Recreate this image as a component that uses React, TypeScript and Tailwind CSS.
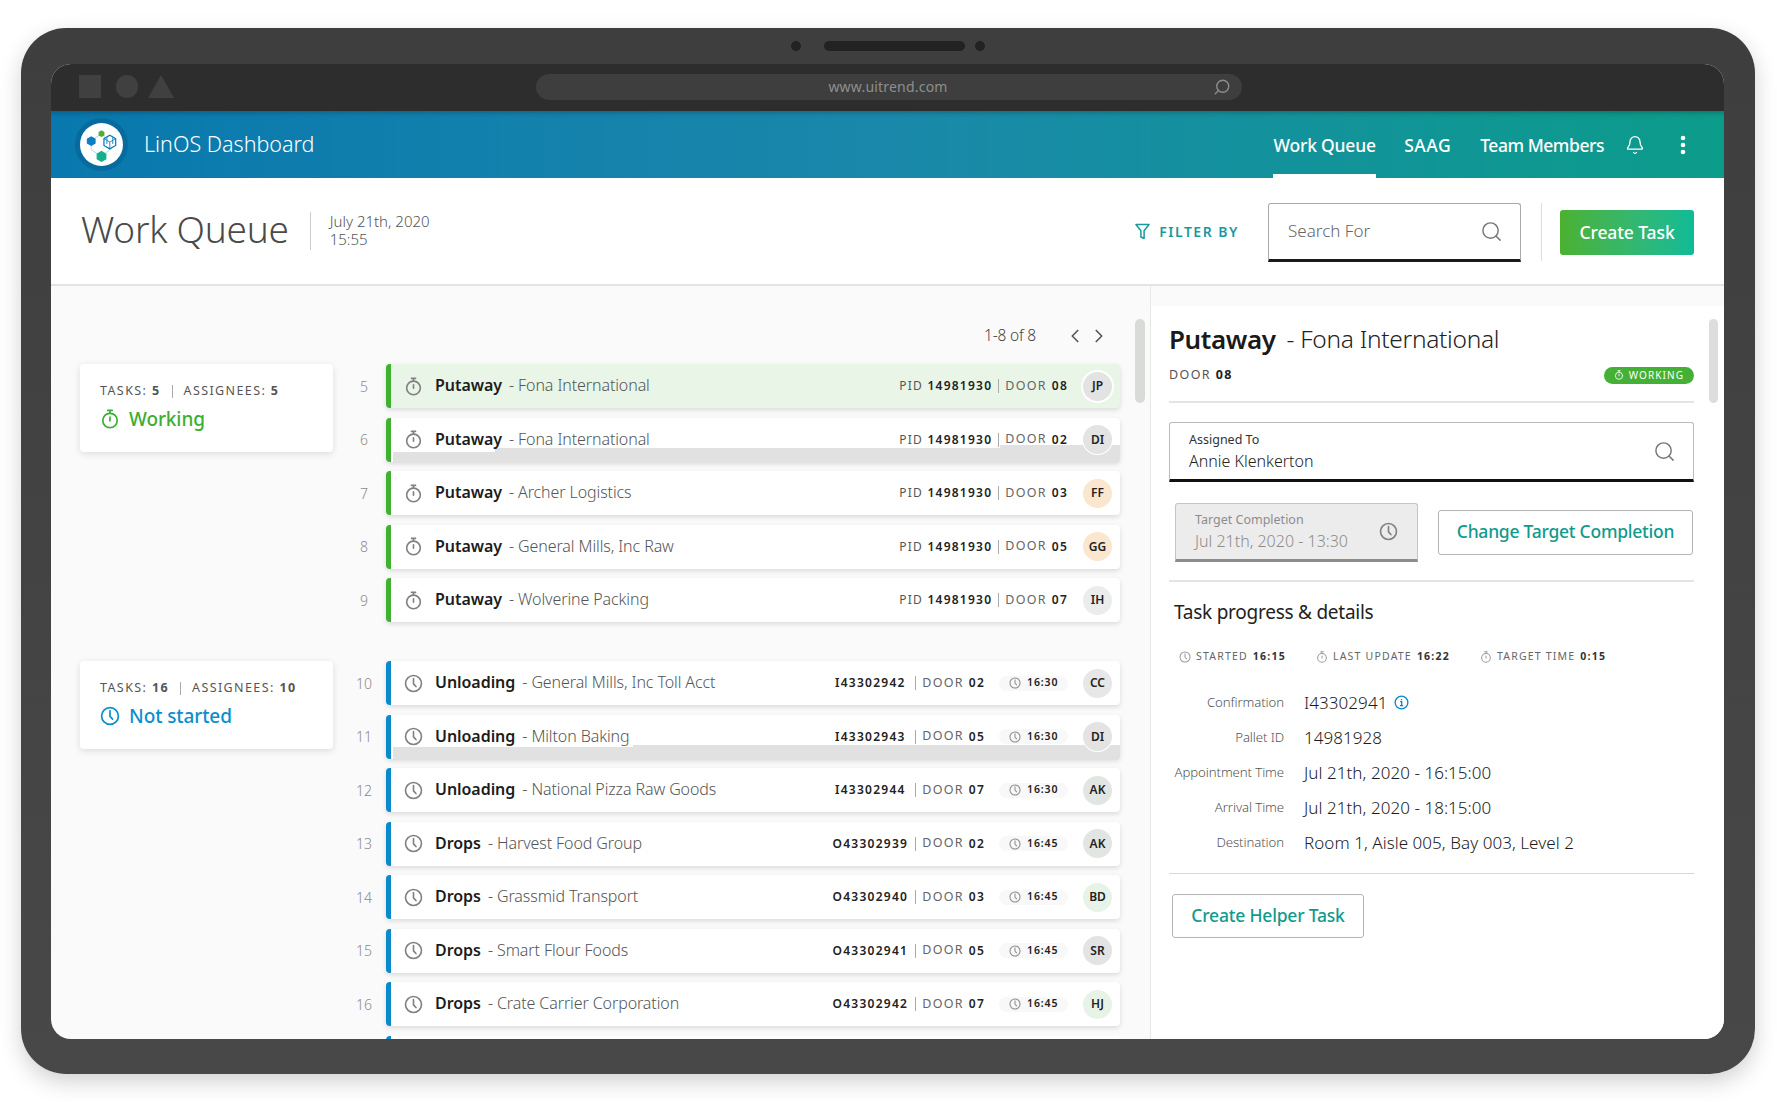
import { Bell, ChevronLeft, ChevronRight, Search } from "lucide-react";

type Row = {
  n: number;
  title: string;
  name: string;
  code: string;
  door: string;
  who: string;
  tone: string;
  time?: string;
  active?: boolean;
  band?: "short" | "long";
};

const working: Row[] = [
  { n: 5, title: "Putaway", name: "Fona International", code: "14981930", door: "08", who: "JP", tone: "bg-[#e2e3e2] ring-2 ring-white", active: true },
  { n: 6, title: "Putaway", name: "Fona International", code: "14981930", door: "02", who: "DI", tone: "bg-[#e2e3e2] ring-1 ring-white", band: "short" },
  { n: 7, title: "Putaway", name: "Archer Logistics", code: "14981930", door: "03", who: "FF", tone: "bg-[#fbe6cf]" },
  { n: 8, title: "Putaway", name: "General Mills, Inc Raw", code: "14981930", door: "05", who: "GG", tone: "bg-[#fbe6cf]" },
  { n: 9, title: "Putaway", name: "Wolverine Packing", code: "14981930", door: "07", who: "IH", tone: "bg-[#ebecec]" },
];

const notStarted: Row[] = [
  { n: 10, title: "Unloading", name: "General Mills, Inc Toll Acct", code: "I43302942", door: "02", who: "CC", tone: "bg-[#e6e7e6]", time: "16:30" },
  { n: 11, title: "Unloading", name: "Milton Baking", code: "I43302943", door: "05", who: "DI", tone: "bg-[#e2e3e2] ring-1 ring-white", time: "16:30", band: "long" },
  { n: 12, title: "Unloading", name: "National Pizza Raw Goods", code: "I43302944", door: "07", who: "AK", tone: "bg-[#e2e6e2]", time: "16:30" },
  { n: 13, title: "Drops", name: "Harvest Food Group", code: "O43302939", door: "02", who: "AK", tone: "bg-[#e2e6e2]", time: "16:45" },
  { n: 14, title: "Drops", name: "Grassmid Transport", code: "O43302940", door: "03", who: "BD", tone: "bg-[#e8f3e8]", time: "16:45" },
  { n: 15, title: "Drops", name: "Smart Flour Foods", code: "O43302941", door: "05", who: "SR", tone: "bg-[#e2e3e2]", time: "16:45" },
  { n: 16, title: "Drops", name: "Crate Carrier Corporation", code: "O43302942", door: "07", who: "HJ", tone: "bg-[#e8f3e8]", time: "16:45" },
];

const details = [
  { label: "Confirmation", value: "I43302941", info: true },
  { label: "Pallet ID", value: "14981928" },
  { label: "Appointment Time", value: "Jul 21th, 2020 - 16:15:00" },
  { label: "Arrival Time", value: "Jul 21th, 2020 - 18:15:00" },
  { label: "Destination", value: "Room 1, Aisle 005, Bay 003, Level 2" },
];

function Stopwatch({ className }: { className?: string }) {
  return (
    <svg viewBox="0 0 20 20" fill="none" stroke="currentColor" strokeWidth="1.7" strokeLinecap="round" className={className}>
      <circle cx="10" cy="11.5" r="7.2" />
      <path d="M10 4V1.6M7.8 1.4h4.4M10 8.2v3.6" />
    </svg>
  );
}

function Clock({ className }: { className?: string }) {
  return (
    <svg viewBox="0 0 20 20" fill="none" stroke="currentColor" strokeWidth="1.7" strokeLinecap="round" strokeLinejoin="round" className={className}>
      <circle cx="10" cy="10" r="8.4" />
      <path d="M10 4.8v5.6l2.6 2.8" />
    </svg>
  );
}

function Logo() {
  return (
    <svg viewBox="0 0 44 44" className="w-[43px] h-[43px]">
      <circle cx="22" cy="22" r="22" fill="#fff" />
      <path d="M22 11 11.500 18v9.500L22 34l8.500-6.500V20z" fill="none" stroke="#9ccfd6" strokeWidth="0.8" />
      <path d="M22 7.500l3 1.700v3.500l-3 1.700-3-1.700V9.200z" fill="#4fb02f" />
      <path d="M11.500 13.500l4.500 2.500v5l-4.500 2.500L7 21v-5z" fill="#0b7fc2" />
      <path d="M22 28.500l5 2.900v5.700l-5 2.900-5-2.900v-5.700z" fill="#14b08c" />
      <path d="M30.500 12.500l6 3.500v7l-6 3.500-6-3.500v-7z" fill="#fff" stroke="#0b7fc2" strokeWidth="1.300" />
      <path d="M24.500 16l6 3.500 6-3.500M30.500 19.500v7M27.500 14.500v7M33.500 14.500v7" fill="none" stroke="#0b7fc2" strokeWidth="0.9" />
    </svg>
  );
}

function GroupCard({ tasks, people, label, tone, icon }: { tasks: number; people: number; label: string; tone: string; icon: React.ReactNode }) {
  return (
    <div className="w-[253px] h-[88px] shrink-0 bg-white rounded-[4px] shadow-[0_2px_7px_rgba(0,0,0,0.12)] pl-[20px] pt-[18px]">
      <div className="flex items-center h-[18px] text-[12.5px] tracking-[1.4px] text-[#555]">
        <span>TASKS: <b className="font-bold">{tasks}</b></span>
        <span className="w-px h-[13px] bg-[#aaa] mx-[11px]" />
        <span>ASSIGNEES: <b className="font-bold">{people}</b></span>
      </div>
      <div className={`flex items-center gap-[9px] mt-[6px] text-[19px] font-medium tracking-[-0.1px] ${tone}`}>
        {icon}
        <span className="leading-[26px]">{label}</span>
      </div>
    </div>
  );
}

function TaskRow({ row, bar }: { row: Row; bar: string }) {
  return (
    <div className="flex items-center h-[44px]">
      <div className="w-[46px] pl-[2px] text-center text-[14px] font-light text-[#8a8a8a]">{row.n}</div>
      <div className={`relative flex items-center w-[734px] h-[44px] rounded-[4px] border-l-[5px] shadow-[0_2px_5px_rgba(0,0,0,0.13)] ${bar} ${row.active ? "bg-[#e9f5e6]" : "bg-white"}`}>
        {row.band === "short" && (
          <>
            <div className="absolute left-[2px] w-[102px] top-[34px] -bottom-[1px] bg-[#e0e1e0]" />
            <div className="absolute left-[104px] w-[505px] top-[30px] -bottom-[1px] bg-[#e0e1e0]" />
            <div className="absolute left-[609px] right-0 top-[27px] -bottom-[1px] bg-[#e0e1e0] rounded-br-[4px]" />
          </>
        )}
        {row.band === "long" && (
          <>
            <div className="absolute left-[2px] w-[240px] top-[32px] -bottom-[1px] bg-[#e0e1e0]" />
            <div className="absolute left-[242px] right-0 top-[30px] -bottom-[1px] bg-[#e0e1e0] rounded-br-[4px]" />
          </>
        )}
        <div className="relative flex items-center w-full">
          {row.time ? (
            <Clock className="w-[19px] h-[19px] ml-[13px] text-[#808080]" />
          ) : (
            <Stopwatch className="w-[19px] h-[19px] ml-[13px] text-[#808080]" />
          )}
          <span className="ml-[12px] pb-[2px] text-[16px] font-semibold text-[#1c1c1c] tracking-[-0.05px]">{row.title}</span>
          <span className="ml-[7px] pb-[2px] text-[16px] font-light text-[#555] tracking-[-0.1px]">- {row.name}</span>
          <div className="ml-auto flex items-center text-[12px] text-[#222] tracking-[1.25px]">
            {row.time ? (
              <span className="w-[78px] text-center font-semibold">{row.code}</span>
            ) : (
              <span className="text-[#555]">
                PID <span className="font-semibold text-[#222]">{row.code}</span>
              </span>
            )}
            <span className="w-px h-[14px] bg-[#aaa] mx-[6px]" />
            <span className="text-[#666] text-[12.5px]">DOOR</span>
            <span className="ml-[5px] font-semibold">{row.door}</span>
            {row.time && (
              <span className="flex items-center ml-[14px] w-[69px] h-[15px] rounded-full bg-[#f8f8f8] text-[10.5px] font-semibold tracking-[0.9px]">
                <Clock className="w-[12px] h-[12px] ml-[10px] mr-[6px] text-[#8a8a8a]" />
                {row.time}
              </span>
            )}
            <span className={`flex items-center justify-center w-[29px] h-[29px] rounded-full ml-[15px] mr-[8px] text-[12px] font-semibold tracking-normal ${row.tone}`}>
              {row.who}
            </span>
          </div>
        </div>
      </div>
    </div>
  );
}

function Group({ rows, bar, card }: { rows: Row[]; bar: string; card: React.ReactNode }) {
  return (
    <div className="flex items-start">
      {card}
      <div className="flex flex-col gap-[9.5px] ml-[7px]">
        {rows.map((r) => (
          <TaskRow key={r.n} row={r} bar={bar} />
        ))}
      </div>
    </div>
  );
}

function StatItem({ icon, label, value }: { icon: React.ReactNode; label: string; value: string }) {
  return (
    <span className="flex items-center text-[10.5px] tracking-[1.2px] text-[#666]">
      {icon}
      <span className="ml-[5px]">{label}</span>
      <b className="ml-[5px] font-bold text-[#333]">{value}</b>
    </span>
  );
}

export default function App() {
  return (
    <div className="w-[1777px] h-[1102px] overflow-hidden bg-white pl-[21px] pt-[28px] font-['Noto_Sans',sans-serif]">
      <div className="w-[1734px] h-[1046px] rounded-[45px] bg-gradient-to-b from-[#3e3e3e] to-[#484848] pl-[30px] pr-[31px] shadow-[0_8px_22px_rgba(0,0,0,0.18)]">
        {/* camera */}
        <div className="h-[36px] flex items-center justify-center">
          <span className="w-[10px] h-[10px] rounded-full bg-[#222]" />
          <span className="w-[141px] h-[10px] rounded-full bg-[#222] ml-[23px] mr-[10px]" />
          <span className="w-[10px] h-[10px] rounded-full bg-[#222]" />
        </div>

        <div className="h-[975px] rounded-[20px] overflow-hidden flex flex-col bg-[#fafafa]">
          {/* browser bar */}
          <div className="h-[47px] shrink-0 bg-[#2d2d2d] flex items-start pl-[28px] pt-[10px]">
            <div className="flex items-center mt-[1px]">
              <span className="w-[22px] h-[23px] bg-[#404040]" />
              <span className="w-[22px] h-[23px] rounded-full bg-[#404040] ml-[15px]" />
              <svg viewBox="0 0 26 23" className="w-[26px] h-[23px] ml-[10px]">
                <path d="M13 0 26 23H0z" fill="#404040" />
              </svg>
            </div>
            <div className="relative w-[706px] h-[26px] rounded-full bg-[#3e3e3e] ml-[362px] flex items-center justify-center pb-[2px] pr-[2px] text-[14px] tracking-[0.2px] text-[#8e8e8e]">
              www.uitrend.com
              <Search className="absolute right-[11px] top-[4px] w-[18px] h-[18px] -scale-x-100 text-[#8e8e8e]" strokeWidth={1.8} />
            </div>
          </div>

          {/* nav */}
          <div className="h-[67px] shrink-0 flex items-center bg-gradient-to-r from-[#0878ae] via-[#1a88aa] to-[#0c9c8a] shadow-[inset_0_5px_5px_-3px_rgba(0,0,0,0.22)] text-white">
            <div className="ml-[29px] rounded-full shadow-[0_0_0_5px_rgba(0,60,100,0.22)] flex">
              <Logo />
            </div>
            <span className="ml-[21px] text-[21.5px] font-light">LinOS Dashboard</span>
            <div className="ml-auto h-full flex items-center text-[17.5px] font-medium tracking-[-0.2px]">
              <span className="relative h-full w-[103px] pt-[2px] flex items-center justify-center">
                Work Queue
                <span className="absolute left-0 right-0 bottom-0 h-[4px] bg-white" />
              </span>
              <span className="ml-[28px] pt-[2px] tracking-[0.5px]">SAAG</span>
              <span className="ml-[29px] pt-[2px] tracking-[-0.45px]">Team Members</span>
              <Bell className="ml-[21px] w-[20px] h-[20px]" strokeWidth={1.6} />
              <svg viewBox="0 0 6 20" className="w-[6px] h-[20px] ml-[35px] mr-[38px]" fill="#fff">
                <circle cx="3" cy="3" r="2.300" />
                <circle cx="3" cy="10" r="2.300" />
                <circle cx="3" cy="17" r="2.300" />
              </svg>
            </div>
          </div>

          {/* sub header */}
          <div className="h-[108px] shrink-0 flex items-center pt-[2px] bg-white border-b-2 border-[#e3e3e3]">
            <h1 className="ml-[30px] mb-[7px] text-[37px] font-light text-[#4a4a4a] tracking-[-0.25px]">Work Queue</h1>
            <span className="w-px h-[38px] bg-[#ccc] ml-[21px] mb-[3px]" />
            <div className="ml-[19px] mb-[5px] text-[15px] leading-[18px] font-light text-[#555]">
              <div>July 21th, 2020</div>
              <div>15:55</div>
            </div>
            <div className="ml-auto mb-[2px] flex items-center text-[#1a9a9c] text-[14px] font-semibold tracking-[1.5px]">
              <svg viewBox="0 0 16 18" fill="none" stroke="currentColor" strokeWidth="1.6" strokeLinejoin="round" className="w-[15px] h-[17px] mr-[9px]">
                <path d="M1 1.500h14l-5.300 6.700v8.300l-3.400-1.600V8.200z" />
              </svg>
              FILTER BY
            </div>
            <div className="ml-[29px] w-[253px] h-[59px] rounded-t-[3px] border border-[#aaa] border-b-[3px] border-b-[#1a1a1a] flex items-center pl-[19px] text-[17px] font-light text-[#666]">
              Search For
              <Search className="ml-auto mr-[17px] w-[23px] h-[23px] text-[#777]" strokeWidth={1.5} />
            </div>
            <span className="w-px h-[58px] bg-[#ddd] ml-[20px]" />
            <button className="ml-[18px] mr-[30px] w-[134px] h-[45px] rounded-[3px] bg-gradient-to-r from-[#4bb12d] to-[#0dbb97] text-white text-[17.5px] font-medium tracking-[-0.1px]">
              Create Task
            </button>
          </div>

          {/* content */}
          <div className="flex-1 min-h-0 flex">
            <div className="w-[1100px] shrink-0 flex overflow-hidden border-r border-[#e8e8e8]">
              <div className="ml-[29px] w-[1040px] shrink-0">
                <div className="h-[78px] flex items-start justify-end pt-[39px] pr-[10px]">
                  <span className="text-[15.5px] leading-[20px] font-light text-[#444] tracking-[-0.2px]">1-8 of 8</span>
                  <ChevronLeft className="ml-[28px] w-[22px] h-[22px] text-[#555]" strokeWidth={1.8} />
                  <ChevronRight className="ml-[2px] w-[22px] h-[22px] text-[#555]" strokeWidth={1.8} />
                </div>
                <Group
                  rows={working}
                  bar="border-[#3fb02f]"
                  card={
                    <GroupCard
                      tasks={5}
                      people={5}
                      label="Working"
                      tone="text-[#3cae32]"
                      icon={<Stopwatch className="w-[20px] h-[20px]" />}
                    />
                  }
                />
                <div className="h-[39px]" />
                <Group
                  rows={notStarted}
                  bar="border-[#0a8acb]"
                  card={
                    <GroupCard
                      tasks={16}
                      people={10}
                      label="Not started"
                      tone="text-[#0a8fce]"
                      icon={<Clock className="w-[20px] h-[20px]" />}
                    />
                  }
                />
                <div className="ml-[306px] mt-[9.500px] h-[44px] w-[734px] bg-white border-l-[5px] border-[#0a8acb] rounded-[4px]" />
              </div>
              <div className="ml-[15px] mt-[33px] w-[10px] h-[84px] rounded-full bg-[#d9dbd9]" />
            </div>

            {/* detail panel */}
            <div className="relative flex-1 min-w-0 bg-white mt-[20px] pl-[18px] pr-[30px]">
              <div className="absolute right-[6px] top-[13px] w-[9px] h-[84px] rounded-full bg-[#dcdedc]" />
              <div className="flex items-center h-[40px] mt-[13px]">
                <span className="text-[26px] font-semibold text-[#1a1a1a] tracking-[-0.4px]">Putaway</span>
                <span className="ml-[11px] text-[24.5px] font-light text-[#222] tracking-[-0.3px]">- Fona International</span>
              </div>
              <div className="flex items-center justify-between mt-[6px] h-[20px]">
                <span className="text-[12.5px] tracking-[1.4px] text-[#555]">
                  DOOR <b className="font-bold text-[#222]">08</b>
                </span>
                <span className="flex items-center justify-center gap-[5px] w-[90px] h-[17px] rounded-full bg-[#44b035] text-white text-[10px] tracking-[1.1px]">
                  <Stopwatch className="w-[10px] h-[10px]" />
                  WORKING
                </span>
              </div>
              <div className="h-[2px] bg-[#e4e4e4] mt-[16px]" />

              <div className="mt-[19px] h-[60px] pt-[1px] rounded-t-[3px] border border-[#bbb] border-b-[3px] border-b-[#111] flex items-center pl-[19px]">
                <div>
                  <div className="text-[12.5px] leading-[18px] text-[#333]">Assigned To</div>
                  <div className="text-[16px] leading-[24px] font-light text-[#222]">Annie Klenkerton</div>
                </div>
                <Search className="ml-auto mr-[17px] w-[23px] h-[23px] text-[#777]" strokeWidth={1.5} />
              </div>

              <div className="flex items-center mt-[21px] ml-[6px]">
                <div className="w-[243px] h-[59px] rounded-t-[3px] border border-[#c4c4c4] border-b-[3px] border-b-[#8c8c8c] bg-[#ececec] flex items-center pl-[19px] text-[#8c8c8c]">
                  <div>
                    <div className="text-[12.5px] leading-[18px]">Target Completion</div>
                    <div className="text-[16px] leading-[24px] font-light">Jul 21th, 2020 - 13:30</div>
                  </div>
                  <Clock className="ml-auto mr-[19px] w-[19px] h-[19px] text-[#808080]" />
                </div>
                <button className="ml-[20px] w-[255px] h-[45px] pb-[2px] rounded-[3px] border border-[#b4b4b4] bg-white text-[17.5px] font-medium text-[#109a8e] tracking-[-0.25px]">
                  Change Target Completion
                </button>
              </div>
              <div className="h-[2px] bg-[#e4e4e4] mt-[18px]" />

              <div className="mt-[16px] ml-[5px] text-[19px] leading-[28px] text-[#222] tracking-[-0.25px]">Task progress &amp; details</div>

              <div className="flex items-center mt-[23px] ml-[10px] h-[16px]">
                <div className="w-[137px]">
                  <StatItem icon={<Clock className="w-[12px] h-[12px] text-[#999]" />} label="STARTED" value="16:15" />
                </div>
                <div className="w-[164px]">
                  <StatItem icon={<Stopwatch className="w-[12px] h-[12px] text-[#999]" />} label="LAST UPDATE" value="16:22" />
                </div>
                <StatItem icon={<Stopwatch className="w-[12px] h-[12px] text-[#999]" />} label="TARGET TIME" value="0:15" />
              </div>

              <div className="mt-[25px] flex flex-col gap-[10px]">
                {details.map((d) => (
                  <div key={d.label} className="flex items-center h-[25px]">
                    <span className="w-[115px] text-right text-[13.2px] font-light text-[#555] tracking-[-0.1px]">{d.label}</span>
                    <span className="ml-[20px] text-[17px] font-light text-[#1c1c1c] tracking-[0.05px]">{d.value}</span>
                    {d.info && (
                      <svg viewBox="0 0 16 16" fill="none" stroke="#0b86c6" strokeWidth="1.4" className="ml-[7px] w-[15px] h-[15px]">
                        <circle cx="8" cy="8" r="6.800" />
                        <path d="M6.500 7h1.700v4.300M6.300 11.300h3.500M8 4.200v1.300" />
                      </svg>
                    )}
                  </div>
                ))}
              </div>
              <div className="h-px bg-[#d8d8d8] mt-[18px]" />

              <button className="mt-[20px] ml-[3px] w-[192px] h-[44px] pb-[1px] rounded-[3px] border border-[#b4b4b4] bg-white text-[17.5px] font-medium text-[#109a8e] tracking-[-0.2px]">
                Create Helper Task
              </button>
            </div>
          </div>
        </div>
      </div>
    </div>
  );
}
